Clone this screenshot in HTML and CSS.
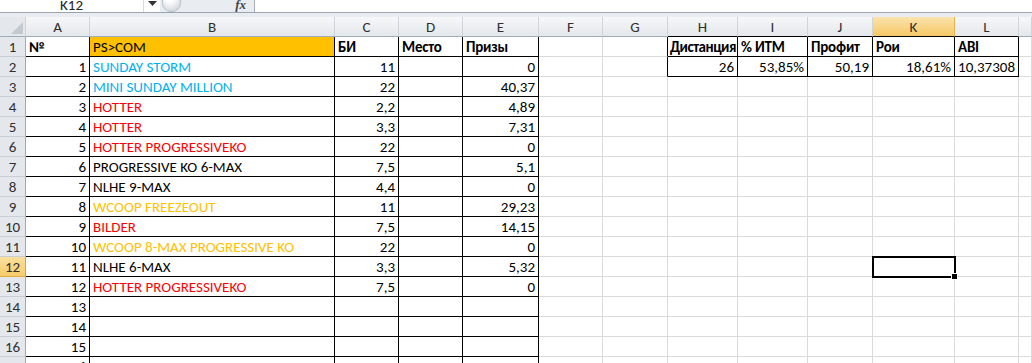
FILE: index.html
```html
<!DOCTYPE html>
<html>
<head>
<meta charset="utf-8">
<link rel="stylesheet" href="styles.css">
</head>
<body>
<div class="app">
  <div class="fbar">
    <div class="namebox"><span class="nb-text">K12</span></div>
    <div class="nb-drop"><svg width="9" height="5" viewBox="0 0 9 5"><path d="M0 0h9L4.5 5z" fill="#333"/></svg></div>
    <div class="pill"></div>
    <div class="fx"><span>fx</span></div>
    <div class="finput"></div>
  </div>
  <div class="gap"></div>
  <div class="sheet">
    <div class="ch corner"><svg width="12" height="12" viewBox="0 0 12 12"><path d="M12 0V12H0z" fill="#c4c8cf"/></svg></div>
    <div class="ch">A</div><div class="ch">B</div><div class="ch">C</div><div class="ch">D</div><div class="ch">E</div><div class="ch">F</div><div class="ch">G</div>
    <div class="ch tb">H</div><div class="ch tb">I</div><div class="ch tb">J</div><div class="ch tb sel">K</div><div class="ch tb">L</div><div class="ch"></div>

    <div class="rh">1</div><div class="c b bold">№</div><div class="c b bold fill">PS&gt;COM</div><div class="c b bold">БИ</div><div class="c b bold">Место</div><div class="c b bold">Призы</div><div class="c"></div><div class="c br"></div><div class="c b bold tight">Дистанция</div><div class="c b bold">% ИТМ</div><div class="c b bold">Профит</div><div class="c b bold">Рои</div><div class="c b bold">ABI</div><div class="c"></div>

    <div class="rh">2</div><div class="c b r">1</div><div class="c b blue">SUNDAY STORM</div><div class="c b r">11</div><div class="c b"></div><div class="c b r">0</div><div class="c"></div><div class="c br"></div><div class="c b r">26</div><div class="c b r">53,85%</div><div class="c b r">50,19</div><div class="c b r">18,61%</div><div class="c b r">10,37308</div><div class="c"></div>

    <div class="rh">3</div><div class="c b r">2</div><div class="c b blue">MINI SUNDAY MILLION</div><div class="c b r">22</div><div class="c b"></div><div class="c b r">40,37</div><div class="c"></div><div class="c"></div><div class="c"></div><div class="c"></div><div class="c"></div><div class="c"></div><div class="c"></div><div class="c"></div>

    <div class="rh">4</div><div class="c b r">3</div><div class="c b red">HOTTER</div><div class="c b r">2,2</div><div class="c b"></div><div class="c b r">4,89</div><div class="c"></div><div class="c"></div><div class="c"></div><div class="c"></div><div class="c"></div><div class="c"></div><div class="c"></div><div class="c"></div>

    <div class="rh">5</div><div class="c b r">4</div><div class="c b red">HOTTER</div><div class="c b r">3,3</div><div class="c b"></div><div class="c b r">7,31</div><div class="c"></div><div class="c"></div><div class="c"></div><div class="c"></div><div class="c"></div><div class="c"></div><div class="c"></div><div class="c"></div>

    <div class="rh">6</div><div class="c b r">5</div><div class="c b red">HOTTER PROGRESSIVEKO</div><div class="c b r">22</div><div class="c b"></div><div class="c b r">0</div><div class="c"></div><div class="c"></div><div class="c"></div><div class="c"></div><div class="c"></div><div class="c"></div><div class="c"></div><div class="c"></div>

    <div class="rh">7</div><div class="c b r">6</div><div class="c b">PROGRESSIVE KO 6-MAX</div><div class="c b r">7,5</div><div class="c b"></div><div class="c b r">5,1</div><div class="c"></div><div class="c"></div><div class="c"></div><div class="c"></div><div class="c"></div><div class="c"></div><div class="c"></div><div class="c"></div>

    <div class="rh">8</div><div class="c b r">7</div><div class="c b">NLHE 9-MAX</div><div class="c b r">4,4</div><div class="c b"></div><div class="c b r">0</div><div class="c"></div><div class="c"></div><div class="c"></div><div class="c"></div><div class="c"></div><div class="c"></div><div class="c"></div><div class="c"></div>

    <div class="rh">9</div><div class="c b r">8</div><div class="c b orange">WCOOP FREEZEOUT</div><div class="c b r">11</div><div class="c b"></div><div class="c b r">29,23</div><div class="c"></div><div class="c"></div><div class="c"></div><div class="c"></div><div class="c"></div><div class="c"></div><div class="c"></div><div class="c"></div>

    <div class="rh">10</div><div class="c b r">9</div><div class="c b red">BILDER</div><div class="c b r">7,5</div><div class="c b"></div><div class="c b r">14,15</div><div class="c"></div><div class="c"></div><div class="c"></div><div class="c"></div><div class="c"></div><div class="c"></div><div class="c"></div><div class="c"></div>

    <div class="rh">11</div><div class="c b r">10</div><div class="c b orange">WCOOP 8-MAX PROGRESSIVE KO</div><div class="c b r">22</div><div class="c b"></div><div class="c b r">0</div><div class="c"></div><div class="c"></div><div class="c"></div><div class="c"></div><div class="c"></div><div class="c"></div><div class="c"></div><div class="c"></div>

    <div class="rh rsel">12</div><div class="c b r">11</div><div class="c b">NLHE 6-MAX</div><div class="c b r">3,3</div><div class="c b"></div><div class="c b r">5,32</div><div class="c"></div><div class="c"></div><div class="c"></div><div class="c"></div><div class="c"></div><div class="c active"><span class="handle"></span></div><div class="c"></div><div class="c"></div>

    <div class="rh">13</div><div class="c b r">12</div><div class="c b red">HOTTER PROGRESSIVEKO</div><div class="c b r">7,5</div><div class="c b"></div><div class="c b r">0</div><div class="c"></div><div class="c"></div><div class="c"></div><div class="c"></div><div class="c"></div><div class="c"></div><div class="c"></div><div class="c"></div>

    <div class="rh">14</div><div class="c b r">13</div><div class="c b"></div><div class="c b"></div><div class="c b"></div><div class="c b"></div><div class="c"></div><div class="c"></div><div class="c"></div><div class="c"></div><div class="c"></div><div class="c"></div><div class="c"></div><div class="c"></div>

    <div class="rh">15</div><div class="c b r">14</div><div class="c b"></div><div class="c b"></div><div class="c b"></div><div class="c b"></div><div class="c"></div><div class="c"></div><div class="c"></div><div class="c"></div><div class="c"></div><div class="c"></div><div class="c"></div><div class="c"></div>

    <div class="rh">16</div><div class="c b r">15</div><div class="c b"></div><div class="c b"></div><div class="c b"></div><div class="c b"></div><div class="c"></div><div class="c"></div><div class="c"></div><div class="c"></div><div class="c"></div><div class="c"></div><div class="c"></div><div class="c"></div>

    <div class="rh">17</div><div class="c b r">16</div><div class="c b"></div><div class="c b"></div><div class="c b"></div><div class="c b"></div><div class="c"></div><div class="c"></div><div class="c"></div><div class="c"></div><div class="c"></div><div class="c"></div><div class="c"></div><div class="c"></div>
  </div>
</div>
</body>
</html>
```

FILE: styles.css
```css
html, body {
  margin: 0;
  padding: 0;
  background: #ffffff;
}
.app {
  width: 1032px;
  height: 363px;
  overflow: hidden;
  font-family: Carlito, Lato, "Liberation Sans", sans-serif;
  font-size: 15px;
  color: #000;
}
.fbar {
  height: 12px;
  display: flex;
  overflow: hidden;
  background: #e9ecf0;
  border-bottom: 1px solid #9aa3ae;
}
.namebox {
  width: 143px;
  background: #fff;
  display: flex;
  justify-content: center;
  align-items: flex-end;
  border-right: 1px solid #d8dce2;
}
.nb-text {
  display: block;
  line-height: 20px;
  margin-bottom: -3px;
  color: #222;
}
.nb-drop {
  width: 16px;
  background: #fff;
  display: flex;
  justify-content: center;
  padding-top: 1px;
}
.pill {
  width: 17px;
  height: 20px;
  margin-top: -10px;
  margin-left: 2px;
  border-radius: 9px;
  border: 1px solid #b9c0c9;
  background: radial-gradient(circle at 40% 35%, #ffffff 20%, #d5dae1 80%);
}
.fx {
  width: 65px;
  display: flex;
  justify-content: flex-end;
  align-items: flex-end;
  padding-right: 8px;
  border-right: 1px solid #a7aeb8;
}
.fx span {
  font-family: "Liberation Serif", serif;
  font-style: italic;
  font-weight: bold;
  font-size: 13px;
  line-height: 14px;
  color: #444;
}
.finput {
  flex: 1;
  background: #fff;
}
.gap {
  height: 4px;
  background: #e9ecf0;
}
.sheet {
  display: grid;
  grid-template-columns: 26px 64px 245px 64px 64px 76px 64px 65px 70px 70px 65px 82px 64px 1fr;
  grid-auto-rows: 20px;
}
.ch {
  box-sizing: border-box;
  background: linear-gradient(#f6f7f9, #e4e7eb);
  border-right: 1px solid #d0d4da;
  border-bottom: 1px solid #9eabb9;
  display: flex;
  align-items: center;
  justify-content: center;
  color: #2f2f2f;
  padding-top: 1px;
}
.ch.corner {
  justify-content: flex-end;
  align-items: flex-end;
  padding: 0 2px 2px 0;
  background: #e4e7ec;
}
.ch.tb {
  border-bottom-color: #000;
}
.ch.sel {
  background: linear-gradient(#fbe3ad, #f5c865);
  border-right-color: #e6b34f;
}
.rh {
  box-sizing: border-box;
  background: #e4e7ec;
  border-right: 1px solid #9eabb9;
  border-bottom: 1px solid #c9ced6;
  display: flex;
  align-items: center;
  justify-content: center;
  color: #2f2f2f;
  padding-top: 1px;
}
.rh.rsel {
  background: linear-gradient(#fbdf9c, #f6cc6b);
  border-bottom-color: #e2ac45;
}
.c {
  box-sizing: border-box;
  border-right: 1px solid #dadada;
  border-bottom: 1px solid #dadada;
  padding: 1px 3px 0 3px;
  line-height: 19px;
  white-space: nowrap;
  overflow: visible;
  position: relative;
}
.c.b {
  border-right-color: #000;
  border-bottom-color: #000;
}
.c.br {
  border-right-color: #000;
}
.c.r {
  text-align: right;
  padding-right: 3px;
}
.bold {
  font-weight: bold;
  letter-spacing: -0.2px;
}
.tight {
  padding-left: 2px;
  letter-spacing: -0.5px;
}
.fill {
  background: #ffc000;
  font-weight: normal;
  letter-spacing: 0;
}
.blue { color: #00b0f0; }
.red { color: #ff0000; }
.orange { color: #ffc000; }
.c.active {
  outline: 2px solid #000;
  outline-offset: -1px;
  z-index: 2;
}
.handle {
  position: absolute;
  right: -4px;
  bottom: -4px;
  width: 5px;
  height: 5px;
  background: #000;
  border: 1px solid #fff;
}
```
